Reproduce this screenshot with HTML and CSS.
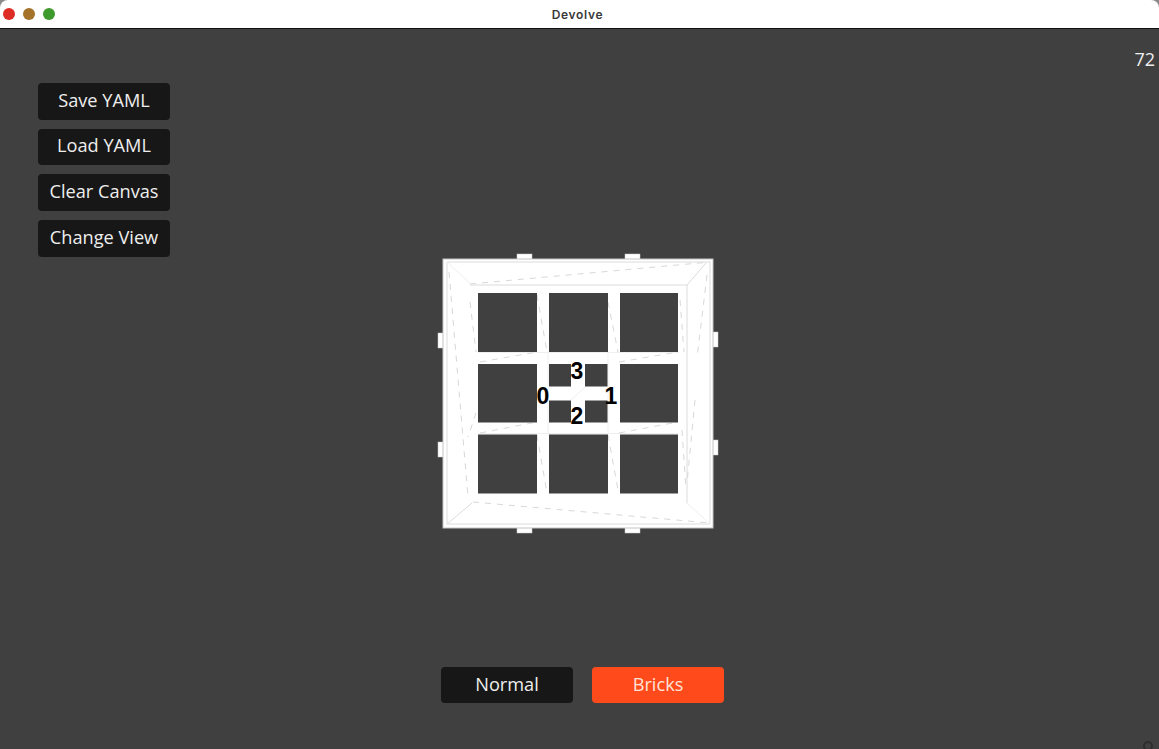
FILE: index.html
```html
<!DOCTYPE html>
<html lang="en">
<head>
    <meta charset="UTF-8">
    <title>Devolve</title>
    <link rel="stylesheet" href="styles.css">
</head>
<body>
    <header class="titlebar">
        <div class="lights">
            <span class="light red"></span>
            <span class="light amber"></span>
            <span class="light green"></span>
        </div>
        <span class="title">Devolve</span>
    </header>
    <main class="stage">
        <div class="fps">72</div>
        <nav class="menu">
            <button class="btn">Save YAML</button>
            <button class="btn">Load YAML</button>
            <button class="btn">Clear Canvas</button>
            <button class="btn">Change View</button>
        </nav>
        <svg class="robot" viewBox="428 240 300 300" width="300" height="300">
            <!-- connector tabs -->
            <g class="tab">
                <rect x="517" y="254" width="15" height="6"/>
                <rect x="625" y="254" width="15" height="6"/>
                <rect x="517" y="527" width="15" height="6"/>
                <rect x="625" y="527" width="15" height="6"/>
                <rect x="438" y="333" width="6" height="15"/>
                <rect x="438" y="442" width="6" height="15"/>
                <rect x="712" y="332" width="6" height="15"/>
                <rect x="712" y="440" width="6" height="15"/>
            </g>
            <rect class="frame" x="443" y="259" width="270" height="269"/>
            <!-- mesh edges -->
            <path class="edge" d="M447 524V262H710V524H447M472 503L447 524M687 285L706 263M687 285V503M470 285H687"/>
            <path class="edge faint" d="M447 262L472 285M687 503L710 524M478 352.500H679M478 433.500H679M548 352H608V434H548ZM571 400L585 387"/>
            <path class="mesh" d="M470 284L710 262M449 272L468 497M470 302L476 352M476 413L468 437M480 362L537 352M480 433L537 422"/>
            <path class="mesh" d="M537 295L547 352M537 435L547 493M608 302L618 352M608 435L618 490M473 502L710 523M707 275L697 358M695 400L687 483"/>
            <path class="mesh" d="M619 362L678 352M619 433L678 422M680 300L684 352M682 430L686 490"/>
            <!-- openings in the panel -->
            <g class="hole">
                <rect x="478" y="293" width="59" height="59"/>
                <rect x="549" y="293" width="59" height="59"/>
                <rect x="620" y="293" width="58" height="59"/>
                <rect x="478" y="364" width="59" height="58.500"/>
                <rect x="620" y="364" width="58" height="58.500"/>
                <rect x="478" y="434.500" width="59" height="59"/>
                <rect x="549" y="434.500" width="59" height="59"/>
                <rect x="620" y="434.500" width="58" height="59"/>
                <rect x="549" y="364" width="22" height="22.500"/>
                <rect x="585" y="364" width="22.500" height="22.500"/>
                <rect x="549" y="400.500" width="22" height="22"/>
                <rect x="585" y="400.500" width="22.500" height="22"/>
            </g>
            <g class="port">
                <text x="543" y="404">0</text>
                <text x="611" y="404">1</text>
                <text x="577" y="424">2</text>
                <text x="577" y="379">3</text>
            </g>
        </svg>
        <div class="modes">
            <button class="btn">Normal</button>
            <button class="btn active">Bricks</button>
        </div>
        <span class="grip"></span>
    </main>
</body>
</html>
```

FILE: styles.css
```css
html { background: #8a8a8a; }
body { margin: 0; height: 100vh; display: flex; flex-direction: column; overflow: hidden; font-family: "Open Sans", sans-serif; }

.titlebar { height: 28px; flex: none; display: flex; align-items: center; justify-content: center; position: relative; background: #fff; border-bottom: 1px solid #111; border-radius: 8px 8px 0 0; }
.title { margin-right: 4px; font-family: "Inter", "Liberation Sans", sans-serif; font-size: 12px; font-weight: 600; color: #3a3a3a; letter-spacing: 0.7px; }
.lights { position: absolute; left: 3px; top: 8px; display: flex; gap: 8px; }
.light { width: 12px; height: 12px; border-radius: 50%; }
.red { background: #dd2c24; }
.amber { background: #a5722a; }
.green { background: #3f9a2d; }

.stage { flex: 1; display: grid; background: #404040; position: relative; }
.stage > * { grid-area: 1 / 1; }

.fps { justify-self: end; margin: 18px 4px 0 0; font-size: 18px; line-height: 24px; color: #eee; }

.menu { justify-self: start; align-self: start; display: flex; flex-direction: column; gap: 9.200px; margin: 54px 0 0 38px; }
.btn { width: 132px; height: 36.500px; padding: 0 0 3px; border: 0; border-radius: 4px; background: #171717; color: #eee; font-family: "Open Sans", sans-serif; font-size: 18.200px; }
.btn.active { background: #ff4a1c; color: #ffe3d6; }

.robot { justify-self: start; align-self: start; margin: 211px 0 0 428px; }
.frame { fill: #fff; stroke: #c4c4c4; stroke-width: 1; }
.tab rect { fill: #fff; stroke: #ccc; stroke-width: 0.500; }
.edge { fill: none; stroke: #dcdcdc; stroke-width: 1; }
.edge.faint { stroke: #efefef; }
.mesh { fill: none; stroke: #d8d8d8; stroke-width: 1; stroke-dasharray: 6 6; }
.hole rect { fill: #404040; }
.port text { font-family: "Liberation Sans", sans-serif; font-size: 23px; font-weight: 700; fill: #000; text-anchor: middle; }

.modes { justify-self: start; align-self: end; display: flex; gap: 19px; margin: 0 0 46px 441px; }
.modes .btn { height: 36px; }

.grip { justify-self: end; align-self: end; width: 6px; height: 6px; margin: 0 6px -2px 0; border: 2px solid #222; border-radius: 50%; opacity: 0.6; }
```
